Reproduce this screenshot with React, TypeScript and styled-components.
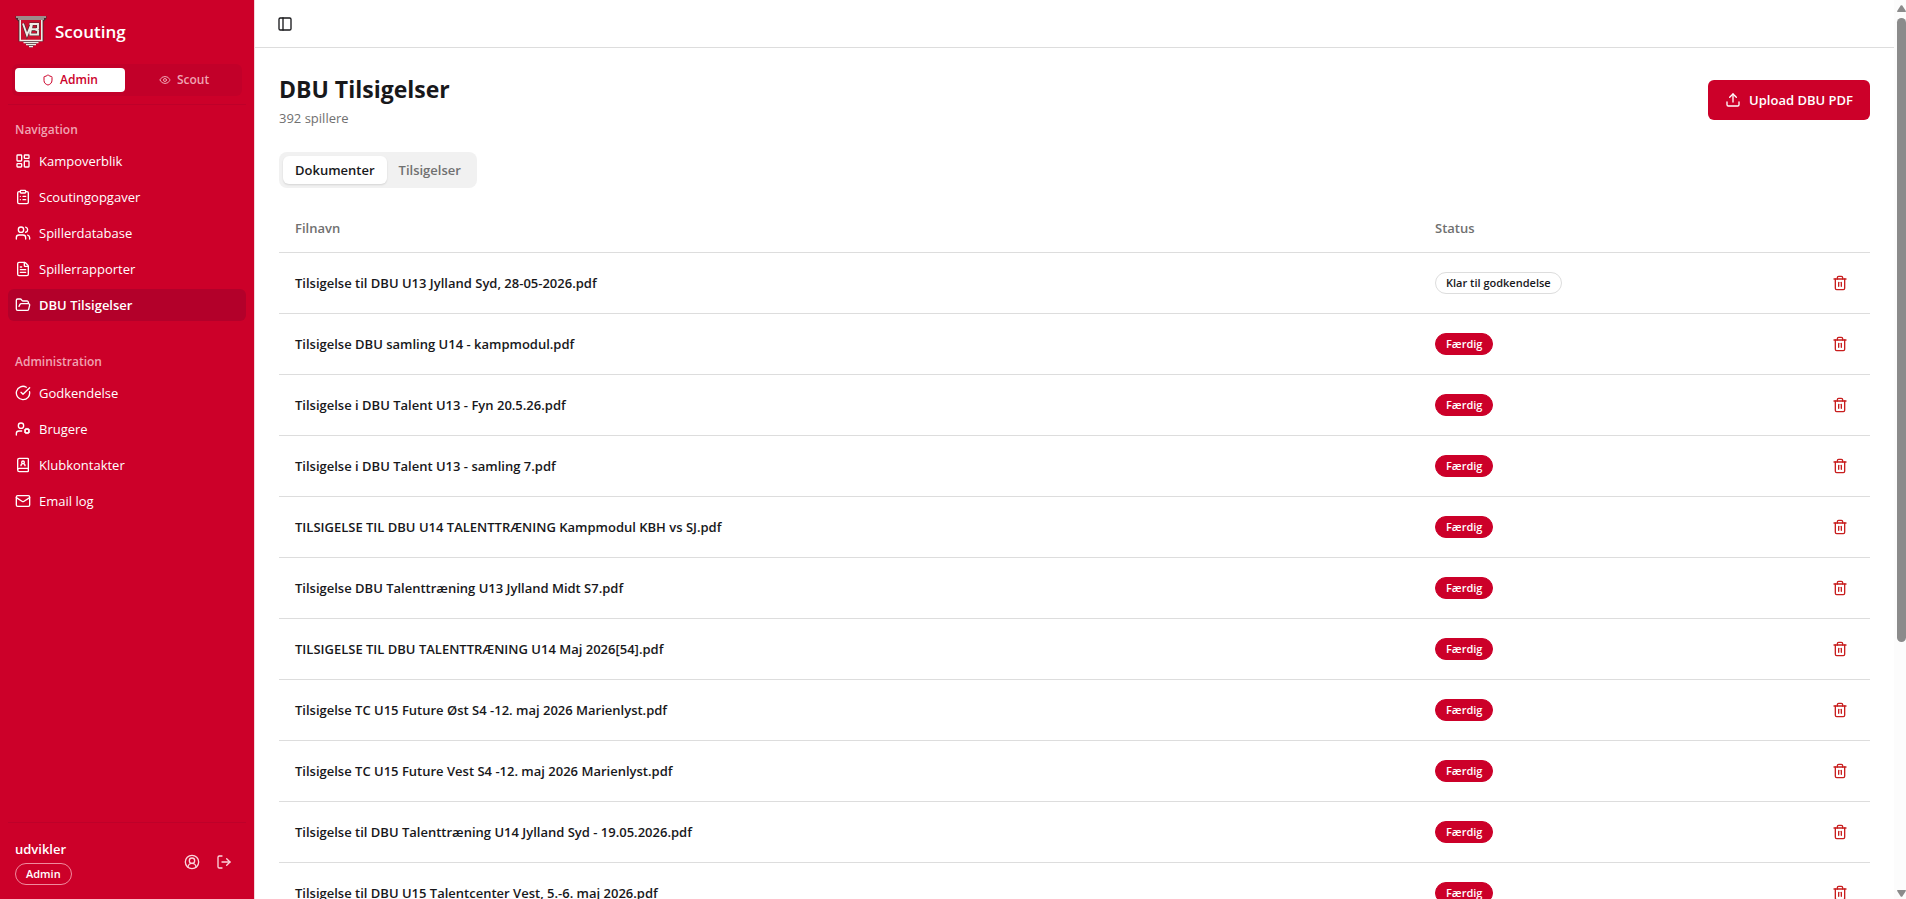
import React from "react";
import styled, { createGlobalStyle, css } from "styled-components";
import {
  BookUser,
  CircleCheckBig,
  CircleUserRound,
  ClipboardList,
  Eye,
  FileText,
  FolderOpen,
  LayoutDashboard,
  LogOut,
  Mail,
  PanelLeft,
  Shield,
  Trash2,
  Upload,
  UserCog,
  Users,
} from "lucide-react";
import type { LucideIcon } from "lucide-react";

const color = {
  brand: "#cc0029",
  brandDark: "#b3002a",
  text: "#18181b",
  muted: "#707070",
  border: "#dddddd",
  danger: "#c81e1e",
};

const GlobalStyle = createGlobalStyle`
  *, *::before, *::after { box-sizing: border-box; }
  body {
    margin: 0;
    background: #fff;
    color: ${color.text};
    font-family: "Segoe UI", "Open Sans", sans-serif;
    font-size: 13px;
    line-height: 20px;
  }
  button { font: inherit; border: 0; padding: 0; cursor: pointer; }
  a { color: inherit; text-decoration: none; }
`;

const Shell = styled.div`
  display: flex;
  height: 100vh;
  overflow: hidden;
`;

const Sidebar = styled.aside`
  flex: none;
  width: 255px;
  display: flex;
  flex-direction: column;
  background: ${color.brand};
  color: #fff;
  border-right: 1px solid #f3d5da;
`;

const SidebarHeader = styled.div`
  margin: 0 8px;
  padding: 16px 4px 8px;
  border-bottom: 1px solid #be0029;
`;

const Brand = styled.div`
  display: flex;
  align-items: center;
  gap: 8px;
  height: 32px;
  padding-left: 3px;
  margin-bottom: 16px;
  font-size: 17px;
  font-weight: 600;
`;

const ModeSwitch = styled.div`
  display: grid;
  grid-template-columns: 1fr 1fr;
  gap: 4px;
  padding: 4px 3px;
  border-radius: 6px;
  background: #c20029;
`;

const ModeButton = styled.button<{ $active?: boolean }>`
  display: flex;
  align-items: center;
  justify-content: center;
  gap: 6px;
  height: 24px;
  border-radius: 4px;
  font-size: 12px;
  font-weight: 600;
  background: ${(p) => (p.$active ? "#fff" : "transparent")};
  color: ${(p) => (p.$active ? color.brand : "#f0a3b2")};
`;

const SidebarNav = styled.nav`
  flex: 1;
  display: flex;
  flex-direction: column;
  gap: 8px;
`;

const NavGroup = styled.section`
  padding: 8px;
`;

const NavLabel = styled.h2`
  margin: 0;
  padding: 2px 7px 0;
  font-size: 12px;
  font-weight: 600;
  line-height: 30px;
  color: #f0a3b2;
`;

const NavList = styled.ul`
  margin: 0;
  padding: 0;
  list-style: none;
  display: flex;
  flex-direction: column;
  gap: 4px;
`;

const NavLink = styled.a<{ $active?: boolean }>`
  display: flex;
  align-items: center;
  gap: 8px;
  height: 32px;
  padding: 0 7px;
  border-radius: 6px;
  ${(p) =>
    p.$active &&
    css`
      background: ${color.brandDark};
      font-weight: 600;
    `}
`;

const SidebarFooter = styled.div`
  display: flex;
  align-items: center;
  justify-content: space-between;
  margin: 0 8px;
  padding: 16px 6px 14px 7px;
  border-top: 1px solid #be0029;
`;

const UserName = styled.div`
  margin-bottom: 4px;
  font-weight: 600;
`;

const FooterActions = styled.div`
  display: flex;
`;

const IconButton = styled.button<{ $tone?: string }>`
  display: inline-flex;
  align-items: center;
  justify-content: center;
  width: 32px;
  height: 32px;
  border-radius: 6px;
  background: transparent;
  color: ${(p) => p.$tone ?? "inherit"};
`;

const Badge = styled.span<{ $kind: "solid" | "outline" | "onBrand" }>`
  display: inline-flex;
  align-items: center;
  height: 22px;
  padding: 0 10px;
  border-radius: 11px;
  border: 1px solid;
  font-size: 11px;
  font-weight: 600;
  line-height: 16px;
  ${(p) =>
    p.$kind === "solid" &&
    css`
      background: ${color.brand};
      border-color: ${color.brand};
      color: #fff;
    `}
  ${(p) =>
    p.$kind === "outline" &&
    css`
      border-color: ${color.border};
    `}
  ${(p) =>
    p.$kind === "onBrand" &&
    css`
      border-color: #f08a9d;
      color: #fff;
    `}
`;

const Content = styled.div`
  flex: 1;
  min-width: 0;
  overflow-y: auto;
  scrollbar-width: none;
`;

const TopBar = styled.header`
  display: flex;
  align-items: center;
  height: 48px;
  padding: 0 14px;
  border-bottom: 1px solid ${color.border};
`;

const Page = styled.main`
  padding: 24px;
`;

const PageHeader = styled.div`
  display: flex;
  align-items: center;
  justify-content: space-between;
  margin-bottom: 24px;
`;

const Title = styled.h1`
  margin: 0 0 2px;
  font-size: 23px;
  font-weight: 700;
  line-height: 34px;
`;

const Subtitle = styled.p`
  margin: 0;
  color: ${color.muted};
`;

const PrimaryButton = styled.button`
  display: inline-flex;
  align-items: center;
  gap: 8px;
  height: 40px;
  padding: 0 17px;
  border-radius: 6px;
  background: ${color.brand};
  color: #fff;
  font-weight: 600;
`;

const Tabs = styled.div`
  display: inline-flex;
  padding: 4px;
  margin-bottom: 16px;
  border-radius: 8px;
  background: #f1f1f1;
  vertical-align: top;
`;

const Tab = styled.button<{ $active?: boolean }>`
  height: 28px;
  padding: 0 12px;
  border-radius: 6px;
  font-weight: 600;
  background: ${(p) => (p.$active ? "#fff" : "transparent")};
  color: ${(p) => (p.$active ? color.text : color.muted)};
  box-shadow: ${(p) => (p.$active ? "0 1px 2px rgba(0, 0, 0, 0.12)" : "none")};
`;

const Table = styled.table`
  width: 100%;
  table-layout: fixed;
  border-collapse: separate;
  border-spacing: 0;
`;

const Th = styled.th<{ $width?: number }>`
  width: ${(p) => (p.$width ? `${p.$width}px` : "auto")};
  height: 49px;
  padding: 0 16px;
  border-bottom: 1px solid ${color.border};
  text-align: left;
  font-weight: 600;
  color: ${color.muted};
`;

const Td = styled.td<{ $end?: boolean }>`
  height: 61px;
  padding: 0 ${(p) => (p.$end ? 14 : 16)}px;
  border-bottom: 1px solid ${color.border};
  text-align: ${(p) => (p.$end ? "right" : "left")};
  font-weight: 600;
`;

const ScrollRail = styled.div`
  flex: none;
  width: 12px;
  padding: 5px 0 2px 3px;
  display: flex;
  flex-direction: column;
  gap: 6px;
  background: #fcfcfc;
`;

const ScrollTrack = styled.div`
  flex: 1;
`;

const ScrollThumb = styled.div`
  height: 72%;
  border-radius: 5px;
  background: #8b8b8b;
`;

const ScrollArrow = ({ down }: { down?: boolean }) => (
  <svg width="9" height="7" viewBox="0 0 9 7" aria-hidden="true">
    <path
      d={down ? "M0 .8Q0 0 .8 0H8.2Q9 0 9 .8L5.3 6.4Q4.5 7.3 3.7 6.4Z" : "M0 6.2Q0 7 .8 7H8.2Q9 7 9 6.2L5.3.6Q4.5-.3 3.7.6Z"}
      fill="#8b8b8b"
    />
  </svg>
);

const ClubCrest = () => (
  <svg width="32" height="32" viewBox="0 0 32 32" aria-hidden="true">
    <path d="M0.5 0H31.5V2.5L28.5 5.5V25.5H24L16 32L8 25.5H3.5V5.5L0.5 2.5Z" fill="#4a2a2f" />
    <path d="M1 1H31M3 3H29" stroke="#efece6" strokeWidth="1.2" />
    <path d="M5.2 4V24.5H26.8V4" fill="#c8102e" stroke="#efece6" strokeWidth="1.6" />
    <path d="M8.5 26.7H23.5M11 28.7H21M14 30.6H18" stroke="#efece6" strokeWidth="1.2" />
    <path
      d="M8 7.5L12 19L16 9M14.5 8H23V12.5L20.5 13.5L23 14.5V18.5H14.5M16.5 13.3H21M17 8L15 18"
      fill="none"
      stroke="#4a2a2f"
      strokeWidth="3.2"
    />
    <path
      d="M8 7.5L12 19L16 9M14.5 8H23V12.5L20.5 13.5L23 14.5V18.5H14.5M16.5 13.3H21M17 8L15 18"
      fill="none"
      stroke="#efece6"
      strokeWidth="1.9"
    />
  </svg>
);

type NavItem = { label: string; icon: LucideIcon; active?: boolean };

const groups: { title: string; items: NavItem[] }[] = [
  {
    title: "Navigation",
    items: [
      { label: "Kampoverblik", icon: LayoutDashboard },
      { label: "Scoutingopgaver", icon: ClipboardList },
      { label: "Spillerdatabase", icon: Users },
      { label: "Spillerrapporter", icon: FileText },
      { label: "DBU Tilsigelser", icon: FolderOpen, active: true },
    ],
  },
  {
    title: "Administration",
    items: [
      { label: "Godkendelse", icon: CircleCheckBig },
      { label: "Brugere", icon: UserCog },
      { label: "Klubkontakter", icon: BookUser },
      { label: "Email log", icon: Mail },
    ],
  },
];

const documents: { name: string; ready?: boolean }[] = [
  { name: "Tilsigelse til DBU U13 Jylland Syd, 28-05-2026.pdf", ready: true },
  { name: "Tilsigelse DBU samling U14 - kampmodul.pdf" },
  { name: "Tilsigelse i DBU Talent U13 - Fyn 20.5.26.pdf" },
  { name: "Tilsigelse i DBU Talent U13 - samling 7.pdf" },
  { name: "TILSIGELSE TIL DBU U14 TALENTTRÆNING Kampmodul KBH vs SJ.pdf" },
  { name: "Tilsigelse DBU Talenttræning U13 Jylland Midt S7.pdf" },
  { name: "TILSIGELSE TIL DBU TALENTTRÆNING U14 Maj 2026[54].pdf" },
  { name: "Tilsigelse TC U15 Future Øst S4 -12. maj 2026 Marienlyst.pdf" },
  { name: "Tilsigelse TC U15 Future Vest S4 -12. maj 2026 Marienlyst.pdf" },
  { name: "Tilsigelse til DBU Talenttræning U14 Jylland Syd - 19.05.2026.pdf" },
  { name: "Tilsigelse til DBU U15 Talentcenter Vest, 5.-6. maj 2026.pdf" },
];

export default function App() {
  return (
    <>
      <GlobalStyle />
      <Shell>
        <Sidebar>
          <SidebarHeader>
            <Brand>
              <ClubCrest />
              Scouting
            </Brand>
            <ModeSwitch>
              <ModeButton type="button" $active aria-pressed="true">
                <Shield size={12} />
                Admin
              </ModeButton>
              <ModeButton type="button" aria-pressed="false">
                <Eye size={12} />
                Scout
              </ModeButton>
            </ModeSwitch>
          </SidebarHeader>
          <SidebarNav>
            {groups.map((group) => (
              <NavGroup key={group.title}>
                <NavLabel>{group.title}</NavLabel>
                <NavList>
                  {group.items.map(({ label, icon: Icon, active }) => (
                    <li key={label}>
                      <NavLink href="#" $active={active} aria-current={active ? "page" : undefined}>
                        <Icon size={16} />
                        {label}
                      </NavLink>
                    </li>
                  ))}
                </NavList>
              </NavGroup>
            ))}
          </SidebarNav>
          <SidebarFooter>
            <div>
              <UserName>udvikler</UserName>
              <Badge $kind="onBrand">Admin</Badge>
            </div>
            <FooterActions>
              <IconButton type="button" aria-label="Profil" $tone="#fbd5dc">
                <CircleUserRound size={16} />
              </IconButton>
              <IconButton type="button" aria-label="Log ud" $tone="#fbd5dc">
                <LogOut size={16} />
              </IconButton>
            </FooterActions>
          </SidebarFooter>
        </Sidebar>
        <Content>
          <TopBar>
            <IconButton type="button" aria-label="Skift sidebar">
              <PanelLeft size={16} />
            </IconButton>
          </TopBar>
          <Page>
            <PageHeader>
              <div>
                <Title>DBU Tilsigelser</Title>
                <Subtitle>392 spillere</Subtitle>
              </div>
              <PrimaryButton type="button">
                <Upload size={16} />
                Upload DBU PDF
              </PrimaryButton>
            </PageHeader>
            <Tabs role="tablist">
              <Tab type="button" role="tab" aria-selected="true" $active>
                Dokumenter
              </Tab>
              <Tab type="button" role="tab" aria-selected="false">
                Tilsigelser
              </Tab>
            </Tabs>
            <Table>
              <thead>
                <tr>
                  <Th>Filnavn</Th>
                  <Th $width={351}>Status</Th>
                  <Th $width={100} aria-label="Handlinger" />
                </tr>
              </thead>
              <tbody>
                {documents.map((doc) => (
                  <tr key={doc.name}>
                    <Td>{doc.name}</Td>
                    <Td>
                      <Badge $kind={doc.ready ? "outline" : "solid"}>
                        {doc.ready ? "Klar til godkendelse" : "Færdig"}
                      </Badge>
                    </Td>
                    <Td $end>
                      <IconButton type="button" aria-label={`Slet ${doc.name}`} $tone={color.danger}>
                        <Trash2 size={16} />
                      </IconButton>
                    </Td>
                  </tr>
                ))}
              </tbody>
            </Table>
          </Page>
        </Content>
        <ScrollRail aria-hidden="true">
          <ScrollArrow />
          <ScrollTrack>
            <ScrollThumb />
          </ScrollTrack>
          <ScrollArrow down />
        </ScrollRail>
      </Shell>
    </>
  );
}
